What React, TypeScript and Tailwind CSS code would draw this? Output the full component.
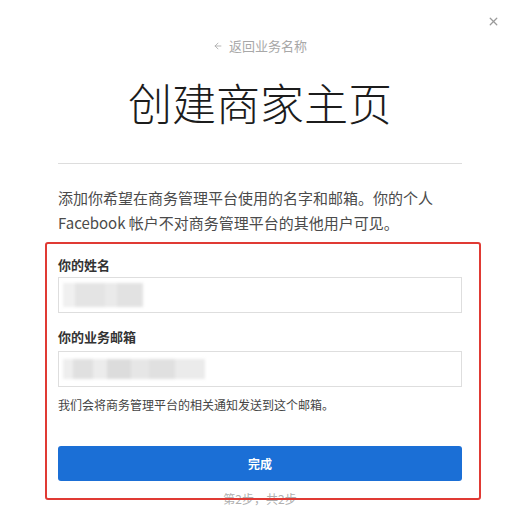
import { X, ArrowLeft } from "lucide-react";

const font = { fontFamily: '"Noto Sans CJK SC", "Noto Sans", sans-serif' };

export default function App() {
    return (
        <div className="relative w-[512px] h-[507px] bg-white overflow-hidden" style={font}>
            <button className="absolute right-[12px] top-[15px] text-[#9a9a9a]">
                <X size={13} strokeWidth={2.4} />
            </button>

            <div className="flex flex-col pl-[58px] pr-[50px]">
                <div className="mt-[36px] h-[20px] flex items-center justify-center gap-[6px] text-[13px] text-[#a8a8a8]">
                    <ArrowLeft size={10} strokeWidth={2} />
                    <span>返回业务名称</span>
                </div>

                <h1 className="mt-[20px] h-[52px] leading-[52px] text-center text-[44px] font-light text-[#1c1c1c]">
                    创建商家主页
                </h1>

                <div className="mt-[35px] h-px bg-[#dddddd]" />

                <p className="mt-[21px] text-[15px] leading-[25px] text-[#4b4b4b]">
                    添加你希望在商务管理平台使用的名字和邮箱。你的个人
                    <br />
                    Facebook 帐户不对商务管理平台的其他用户可见。
                </p>

                <label className="mt-[21px] h-[18px] leading-[18px] text-[13px] font-bold text-[#333]">你的姓名</label>
                <div className="mt-[3px] h-[36px] border border-[#dedede] flex items-center pl-[4px]">
                    <div className="flex h-[24px] items-stretch blur-[1.5px]">
                        <div className="w-[12px] bg-[#f0f0f0]" />
                        <div className="w-[30px] bg-[#e4e4e4]" />
                        <div className="w-[12px] bg-[#eaeaea]" />
                        <div className="w-[26px] bg-[#e2e2e2]" />
                    </div>
                </div>

                <label className="mt-[15px] h-[18px] leading-[18px] text-[13px] font-bold text-[#333]">你的业务邮箱</label>
                <div className="mt-[5px] h-[36px] border border-[#dedede] flex items-center pl-[4px]">
                    <div className="flex h-[20px] items-stretch blur-[1.5px]">
                        <div className="w-[10px] bg-[#eeeeee]" />
                        <div className="w-[20px] bg-[#e0e0e0]" />
                        <div className="w-[14px] bg-[#ececec]" />
                        <div className="w-[24px] bg-[#dcdcdc]" />
                        <div className="w-[18px] bg-[#e6e6e6]" />
                        <div className="w-[26px] bg-[#e0e0e0]" />
                        <div className="w-[30px] bg-[#ebebeb]" />
                    </div>
                </div>

                <p className="mt-[10px] h-[16px] leading-[16px] text-[12px] text-[#444]">
                    我们会将商务管理平台的相关通知发送到这个邮箱。
                </p>

                <button className="mt-[33px] h-[35px] rounded-[3px] bg-[#1b6fd6] text-white text-[12px] font-bold">
                    完成
                </button>

                <p className="mt-[10px] text-center text-[12px] leading-[16px] text-[#b0b0b0]">第2步，共2步</p>
            </div>

            <div className="absolute left-[45px] top-[242px] w-[436px] h-[258px] border-2 border-[#e03a34] rounded-[3px] pointer-events-none" />
        </div>
    );
}
